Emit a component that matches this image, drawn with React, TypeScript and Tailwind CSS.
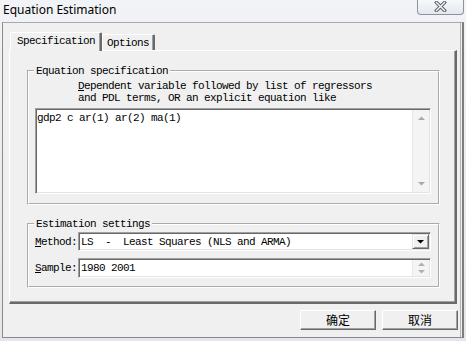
import React from "react";

const mono = "font-['Liberation_Mono',monospace] text-[11px] leading-[12px] tracking-[-0.6px] text-black";

function UpTri({ color = "#a8a8a8" }: { color?: string }) {
  return (
    <svg width="7" height="4" viewBox="0 0 7 4">
      <path d="M0 4 L7 4 L3.5 0.5 Z" fill={color} />
    </svg>
  );
}
function DownTri({ color = "#a8a8a8" }: { color?: string }) {
  return (
    <svg width="7" height="4" viewBox="0 0 7 4">
      <path d="M0 0 L7 0 L3.5 3.5 Z" fill={color} />
    </svg>
  );
}

export default function App() {
  return (
    <div className="w-[466px] h-[341px] bg-gradient-to-b from-[#f1f3f6] to-[#e3e7eb] flex flex-col overflow-hidden font-['Noto_Sans',sans-serif]">
      {/* title bar */}
      <div className="h-[22px] shrink-0 flex justify-between">
        <div className="pl-[3px] pt-[2px] text-[12px] leading-[16px] text-black">Equation Estimation</div>
        <div className="mr-[2px] w-[47px] h-[15px] border border-t-0 border-[#8e939b] rounded-b-[4px] bg-gradient-to-b from-[#f7f8fa] to-[#e4e8ed] flex justify-center pt-[1px]">
          <svg width="13" height="11" viewBox="0 0 13 11">
            <path d="M2.5 1.5 L10.5 9.5 M10.5 1.5 L2.5 9.5" stroke="#5b6270" strokeWidth="3.4" strokeLinecap="square" fill="none" />
            <path d="M2.5 1.5 L10.5 9.5 M10.5 1.5 L2.5 9.5" stroke="#f7f7f7" strokeWidth="1.4" strokeLinecap="square" fill="none" />
          </svg>
        </div>
      </div>

      {/* client area */}
      <div className="ml-[2px] w-[462px] h-[316px] shrink-0 bg-[#f0f0f0] border-l border-t border-b border-r-2 border-l-[#8a8a8a] border-t-[#a8a8a8] border-b-[#8a8a8a] border-r-[#7c7c7c] shadow-[inset_-1px_0_0_#f0f0f0,inset_-2px_0_0_#b4b4b4] flex flex-col items-start pl-[6px] pt-[9px]">
        {/* tabs */}
        <div className="relative z-10 h-[18px] flex items-end ml-[1px]">
          <div className={`${mono} w-[92px] h-[19px] -mb-[1px] bg-[#f0f0f0] border-l border-t border-r-2 border-l-white border-t-white border-r-[#696969] rounded-tl-[2px] rounded-tr-[2px] shadow-[inset_-1px_0_0_#a0a0a0] pl-[6px] pt-[2px]`}>
            Specification
          </div>
          <div className={`${mono} w-[53px] h-[16px] bg-[#f0f0f0] border-l border-t border-r-2 border-l-white border-t-white border-r-[#696969] rounded-tl-[2px] rounded-tr-[2px] shadow-[inset_-1px_0_0_#a0a0a0] pl-[4px] pt-[2px]`}>
            Options
          </div>
        </div>

        {/* tab panel */}
        <div className="w-[448px] h-[254px] border-l border-t border-r-2 border-b-2 border-l-white border-t-white border-r-[#696969] border-b-[#696969] shadow-[inset_-1px_-1px_0_#a0a0a0] flex flex-col pl-[17px] pt-[14px]">
          {/* Equation specification */}
          <fieldset className="w-[413px] border-2 [border-style:groove] border-white px-[6px] pt-[3px] pb-[9px]">
            <legend className={`${mono} -ml-[1px] px-[2px]`}>Equation specification</legend>
            <div className={`${mono} pl-[43px] whitespace-pre`}>
              <div>
                <span className="underline underline-offset-[1px]">D</span>ependent variable followed by list of regressors
              </div>
              <div>and PDL terms, OR an explicit equation like</div>
            </div>
            <div className="mt-[4px] w-[396px] h-[86px] bg-white border border-t-[#a0a0a0] border-l-[#a0a0a0] border-b-white border-r-white shadow-[inset_1px_1px_0_#696969,inset_-1px_-1px_0_#e3e3e3] p-[1px] flex">
              <div className={`${mono} flex-1 pt-[2px] whitespace-pre`}>gdp2 c ar(1) ar(2) ma(1)</div>
              <div className="w-[17px] bg-[#f4f4f4] border-l border-[#e4e4e4] flex flex-col justify-between items-center py-[6px]">
                <UpTri color="#a9a9a9" />
                <DownTri color="#a9a9a9" />
              </div>
            </div>
          </fieldset>

          {/* Estimation settings */}
          <fieldset className="mt-[13px] w-[413px] border-2 [border-style:groove] border-white px-[6px] pt-[2px] pb-[8px]">
            <legend className={`${mono} -ml-[1px] px-[2px]`}>Estimation settings</legend>
            <div className="flex items-center">
              <div className={`${mono} w-[43px]`}>
                <span className="underline underline-offset-[1px]">M</span>ethod:
              </div>
              <div className="w-[353px] h-[19px] bg-white border border-t-[#a0a0a0] border-l-[#a0a0a0] border-b-white border-r-white shadow-[inset_1px_1px_0_#696969,inset_-1px_-1px_0_#e3e3e3] p-[1px] flex">
                <div className={`${mono} flex-1 flex items-center pl-[1px] whitespace-pre`}>LS  -  Least Squares (NLS and ARMA)</div>
                <div className="w-[17px] bg-[#f0f0f0] border-t border-l border-t-[#e3e3e3] border-l-[#e3e3e3] border-b border-r border-b-[#696969] border-r-[#696969] shadow-[inset_1px_1px_0_#fff,inset_-1px_-1px_0_#a0a0a0] flex items-center justify-center">
                  <DownTri color="#000000" />
                </div>
              </div>
            </div>
            <div className="flex items-center mt-[7px]">
              <div className={`${mono} w-[43px]`}>
                <span className="underline underline-offset-[1px]">S</span>ample:
              </div>
              <div className="w-[353px] h-[20px] bg-white border border-t-[#a0a0a0] border-l-[#a0a0a0] border-b-white border-r-white shadow-[inset_1px_1px_0_#696969,inset_-1px_-1px_0_#e3e3e3] p-[1px] flex">
                <div className={`${mono} flex-1 flex items-center pl-[1px] whitespace-pre`}>1980 2001</div>
                <div className="w-[17px] bg-[#f4f4f4] border-l border-[#e8e8e8] flex flex-col justify-center items-center gap-[4px]">
                  <UpTri color="#b0b0b0" />
                  <DownTri color="#b0b0b0" />
                </div>
              </div>
            </div>
          </fieldset>
        </div>

        {/* buttons */}
        <div className="self-stretch flex justify-end gap-[6px] mt-[6px] pr-[4px]">
          <button className="w-[76px] h-[20px] bg-[#f0f0f0] border-t border-l border-t-white border-l-white border-b border-r border-b-[#696969] border-r-[#696969] shadow-[inset_-1px_-1px_0_#a0a0a0] text-[12px] leading-[16px] text-black font-['Noto_Sans_CJK_SC',sans-serif]">
            确定
          </button>
          <button className="w-[76px] h-[20px] bg-[#f0f0f0] border-t border-l border-t-white border-l-white border-b border-r border-b-[#696969] border-r-[#696969] shadow-[inset_-1px_-1px_0_#a0a0a0] text-[12px] leading-[16px] text-black font-['Noto_Sans_CJK_SC',sans-serif]">
            取消
          </button>
        </div>
      </div>
    </div>
  );
}
